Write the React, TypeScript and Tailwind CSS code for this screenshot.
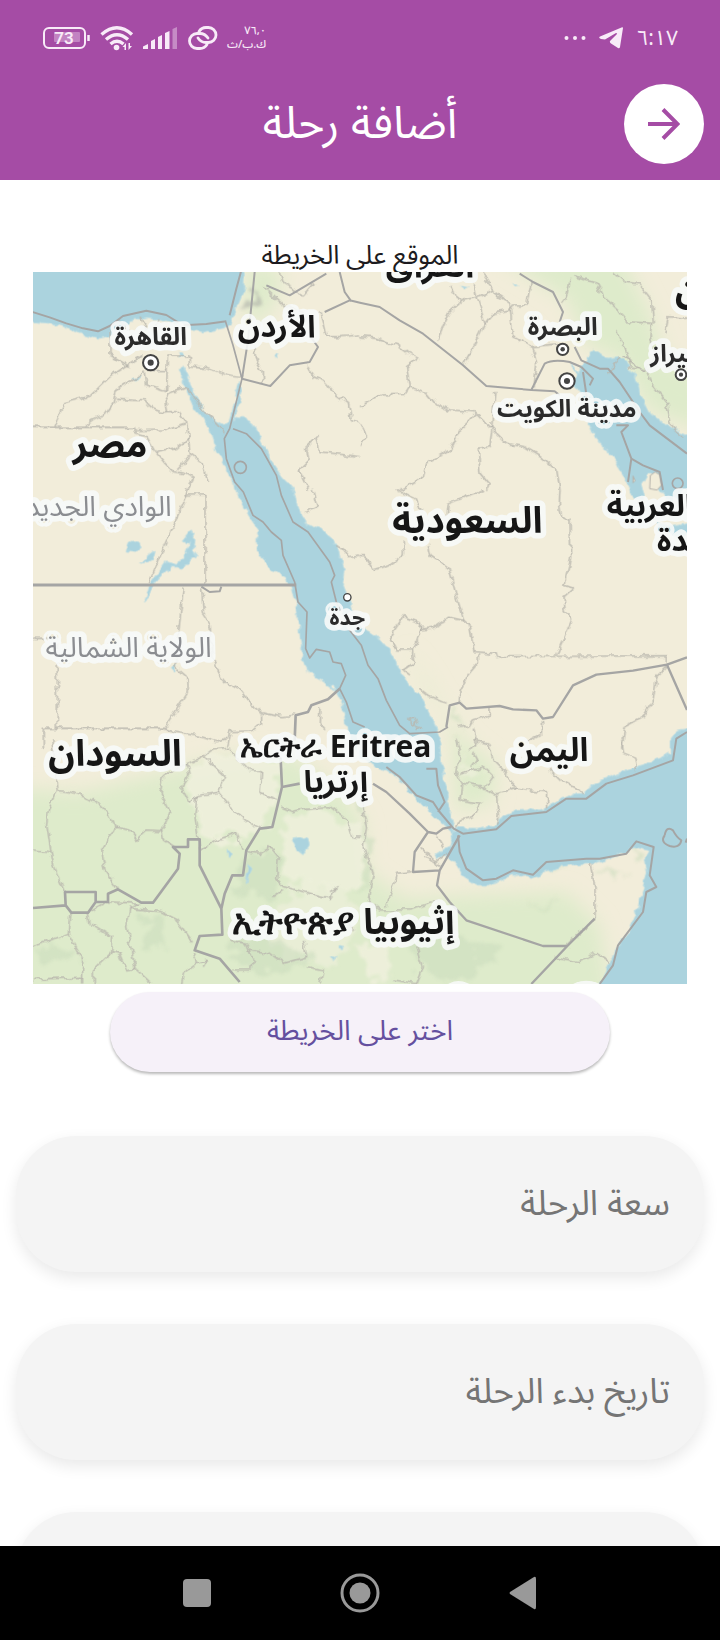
import React from 'react';

const arabic = "font-['Noto_Sans_Arabic','Noto_Kufi_Arabic','DejaVu_Sans',sans-serif]";

type Label = {
  text: string;
  x: number;
  y: number;
  size: number;
  anchor?: 'start' | 'middle' | 'end';
  tone?: 'country' | 'city' | 'region';
  ltr?: boolean;
};

const labels: Label[] = [
  { text: 'العراق', x: 1191, y: 14, size: 100 },
  { text: 'القاهرة', x: 353, y: 219, size: 74, tone: 'city' },
  { text: 'الأردن', x: 731, y: 194, size: 92 },
  { text: 'مصر', x: 231, y: 556, size: 110 },
  { text: 'البصرة', x: 1589, y: 189, size: 74, tone: 'city' },
  { text: 'مدينة الكويت', x: 1601, y: 436, size: 72, tone: 'city' },
  { text: 'شيراز', x: 1852, y: 270, size: 72, anchor: 'end', tone: 'city' },
  { text: 'إيران', x: 1926, y: 90, size: 110, anchor: 'end' },
  { text: 'السعودية', x: 1303, y: 782, size: 110 },
  { text: 'العربية', x: 1721, y: 732, size: 92, anchor: 'end' },
  { text: 'المتحدة', x: 1872, y: 837, size: 92, anchor: 'end' },
  { text: 'الوادي الجديد', x: 416, y: 732, size: 84, anchor: 'start', tone: 'region' },
  { text: 'الولاية الشمالية', x: 536, y: 1154, size: 84, anchor: 'start', tone: 'region' },
  { text: 'جدة', x: 943, y: 1059, size: 64, tone: 'city' },
  { text: 'السودان', x: 246, y: 1482, size: 110 },
  { text: 'ኤርትራ Eritrea', x: 908, y: 1454, size: 90, ltr: true },
  { text: 'إرتريا', x: 908, y: 1561, size: 92 },
  { text: 'اليمن', x: 1548, y: 1467, size: 98 },
  { text: 'إثيوبيا ኢትዮጵያ', x: 931, y: 1985, size: 105 },
];

const labelFill = { country: '#161616', city: '#2b2b2b', region: '#8b8d91' };

function MapLabel({ text, x, y, size, anchor = 'middle', tone = 'country', ltr }: Label) {
  return (
    <text
      x={x}
      y={y}
      fontSize={size}
      textAnchor={anchor}
      direction={ltr ? 'ltr' : 'rtl'}
      fontWeight={tone === 'region' ? 400 : 700}
      fill={labelFill[tone]}
      stroke="#f7faf8"
      strokeOpacity="0.9"
      strokeWidth="34"
      strokeLinejoin="round"
      paintOrder="stroke"
    >
      {text}
    </text>
  );
}

function City({ x, y, r }: { x: number; y: number; r: number }) {
  return (
    <g>
      <circle cx={x} cy={y} r={r} fill="#fff" stroke="#444" strokeWidth="6" />
      <circle cx={x} cy={y} r={r * 0.4} fill="#444" />
    </g>
  );
}

function RegionMap() {
  return (
    <svg viewBox="0 0 1962 2136" role="img" aria-label="الخريطة" className={`block w-full ${arabic}`}>
      <defs>
        <filter id="soft" x="-20%" y="-20%" width="140%" height="140%">
          <feGaussianBlur stdDeviation="28" />
        </filter>
        <filter id="patch" x="-20%" y="-20%" width="140%" height="140%">
          <feTurbulence type="fractalNoise" baseFrequency="0.02" numOctaves="3" seed="4" result="noise" />
          <feDisplacementMap in="SourceGraphic" in2="noise" scale="110" xChannelSelector="R" yChannelSelector="G" />
          <feGaussianBlur stdDeviation="4" />
        </filter>
        <filter id="jagged" filterUnits="userSpaceOnUse" x="-40" y="-40" width="2042" height="2216">
          <feTurbulence type="fractalNoise" baseFrequency="0.04" numOctaves="2" seed="7" result="noise" />
          <feDisplacementMap in="SourceGraphic" in2="noise" scale="22" xChannelSelector="R" yChannelSelector="G" />
        </filter>
      </defs>
      <rect width="1962" height="2136" fill="#f2edda" />

      {/* vegetation */}
      <g fill="#deebcb" filter="url(#soft)">
        <path d="M-60 1550 L150 1560 L400 1500 L560 1460 L760 1440 L930 1560 L990 1650 L1000 1800 L1120 1880 L1300 1870 L1600 1860 L1700 1960 L1740 2200 L-60 2200Z" />
        <path d="M1370 -60 L1760 -60 L1850 120 L1900 260 L2030 330 L2030 480 L1850 420 L1760 260 L1660 220 L1600 80Z" />
        <path d="M640 -20 L740 -20 L740 70 L680 160 L630 120Z" />
        <path d="M1245 1290 L1290 1400 L1390 1480 L1380 1590 L1270 1620 L1260 1440Z" />
        <path d="M1120 1120 L1190 1230 L1240 1320 L1190 1280Z" opacity="0.6" />
      </g>
      <g fill="#f0f0dd" filter="url(#patch)">
        <path d="M460 1490 L560 1440 L740 1470 L740 1570 L690 1660 L520 1720 L480 1580Z" opacity="0.85" />
        <path d="M760 1640 L900 1610 L990 1700 L980 1850 L860 1860 L740 1820Z" opacity="0.75" />
        <path d="M780 1850 L960 1850 L980 1960 L900 2080 L740 2050 L690 1960Z" opacity="0.6" />
        <path d="M970 2020 L1080 2020 L1070 2130 L1000 2120Z" opacity="0.8" />
        <path d="M1290 1450 L1350 1500 L1300 1540Z" opacity="0.7" />
      </g>
      <g fill="#cadcbd" opacity="0.55" filter="url(#patch)">
        <path d="M650 1740 L740 1750 L720 1860 L590 1860Z" />
        <path d="M330 1920 L390 1960 L370 2060 L340 2000Z" />
        <path d="M590 2010 L690 1990 L850 2060 L750 2110 L600 2070Z" />
        <path d="M1100 1950 L1240 1980 L1400 2060 L1270 2130 L1160 2110Z" />
        <path d="M0 2030 L90 2020 L140 2060 L20 2070Z" />
        <path d="M1400 1760 L1600 1780 L1530 1800Z M1660 1800 L1780 1790 L1740 1820Z M1800 1730 L1840 1730 L1820 1760Z" />
        <path d="M1260 1300 L1280 1300 L1270 1380Z M1480 1900 L1580 1890 L1540 1910Z" />
        <path d="M985 1560 L1000 1620 L1020 1800 L990 1860Z" />
        <path d="M640 50 L660 50 L660 120 L630 110Z" fill="#a9aaa5" />
      </g>

      {/* seas and lakes */}
      <g fill="#abd3de" stroke="#b7dae2" strokeWidth="3" strokeLinejoin="round" filter="url(#jagged)">
        <path d="M-25 -25 H634 L632 54 L611 104 L598 140 L590 164 L552 172 L511 180 L471 172 L456 158 L421 154 L391 142 L341 139 L291 149 L256 179 L231 192 L196 199 L151 186 L101 169 L51 154 L-25 146Z" />
        <path d="M451 279 L439 296 L461 354 L481 404 L521 454 L531 484 L551 534 L576 584 L601 634 L611 654 L631 704 L659 749 L681 779 L671 784 L673 834 L691 864 L721 894 L756 914 L776 944 L791 994 L796 1054 L803 1104 L811 1164 L826 1199 L861 1219 L901 1249 L921 1284 L936 1324 L946 1389 L981 1454 L1041 1489 L1091 1514 L1131 1559 L1181 1609 L1221 1649 L1256 1680 L1262 1664 L1246 1604 L1241 1554 L1226 1484 L1219 1404 L1206 1354 L1191 1324 L1161 1274 L1131 1244 L1111 1214 L1091 1174 L1066 1134 L1031 1094 L996 1072 L966 1044 L951 994 L931 944 L936 894 L921 854 L901 804 L861 769 L821 754 L796 714 L781 654 L746 614 L711 564 L691 514 L671 474 L646 444 L611 436 L603 449 L611 419 L621 374 L627 334 L616 329 L606 384 L591 449 L566 459 L536 444 L511 414 L491 374 L461 314Z" />
        <path d="M1256 1674 L1281 1669 L1331 1669 L1381 1662 L1411 1634 L1451 1616 L1521 1614 L1571 1589 L1621 1566 L1651 1564 L1681 1539 L1721 1519 L1781 1494 L1831 1479 L1881 1459 L1912 1440 L1912 1402 L1931 1376 L1990 1366 V2160 H1690 L1721 2094 L1751 2034 L1791 1964 L1816 1904 L1831 1854 L1843 1804 L1836 1754 L1846 1734 L1811 1724 L1781 1739 L1741 1754 L1681 1774 L1631 1779 L1581 1786 L1541 1799 L1496 1816 L1441 1809 L1411 1819 L1371 1839 L1331 1839 L1291 1814 L1271 1774 L1241 1749 L1216 1756 L1206 1749 L1251 1724 L1259 1704Z" />
        <path d="M1616 274 L1636 299 L1661 264 L1671 244 L1681 229 L1701 244 L1721 259 L1761 254 L1781 274 L1806 314 L1821 364 L1851 424 L1891 459 L1931 474 L1990 499 V694 L1900 680 L1880 654 L1873 600 L1845 604 L1825 640 L1835 680 L1800 676 L1776 620 L1761 594 L1741 554 L1711 524 L1681 494 L1666 454 L1671 404 L1641 364 L1621 334 L1631 304Z" />
        <path d="M1868 750 L1910 762 L1990 748 V790 L1880 785Z" />
        <path d="M779 1702 L800 1694 L826 1700 L828 1720 L810 1748 L785 1728Z M585 1732 L598 1744 L590 1760Z M645 1780 L660 1790 L640 1835Z" />
        <path d="M475 774 L486 800 L483 840 L495 855 L470 862 L450 885 L410 885 L380 915 L335 990 L350 940 L400 870 L430 878 L460 845 L470 815 L448 808Z M285 815 L300 804 L325 826 L310 838 L280 834Z M345 850 L366 835 L360 862 L320 875Z" />
        <path d="M300 320 L322 314 L305 328Z M440 240 L455 250 L445 256Z M415 1190 L430 1178 L425 1200Z M1285 40 L1305 44 L1290 52Z M1440 36 L1460 42 L1445 44Z M725 250 L738 247 L730 256Z M920 2020 L930 2022 L918 2036Z M892 2060 L912 2054 L900 2066Z" />
      </g>
      <path d="M1852 610 L1866 600 L1880 608 L1885 640 L1872 654 L1850 650Z M1800 612 L1806 626 L1800 632Z" fill="#f2edda" stroke="#b3b0aa" strokeWidth="3" />

      {/* province lines */}
      <g fill="none" stroke="#b9b7ae" strokeWidth="4" strokeLinejoin="round" filter="url(#jagged)">
        <g transform="translate(-9 -126)">
          <path d="M9 592 H310 L318 612 L350 620 L372 660 L405 700 L430 725 L465 730 L490 745 L470 780 M72 590 L103 518 L180 498 L240 440 L340 375 M165 590 Q190 560 225 555 L250 520 L258 480 L310 450 L345 425 L350 465 L410 485 L412 380 M240 300 V375 L300 410 M258 505 L345 510 Q370 550 410 545 L445 545 L470 580 L475 630 L480 670 L520 700 L535 760 M410 545 L405 515 L420 488 L465 475 M355 422 H410 M412 378 H478 V410 M478 408 L530 412 Q590 438 640 440 M318 602 L400 600 L465 580 M380 668 L440 655 L475 625 M440 722 L480 675 M465 470 L490 495 L520 540 L585 610 M670 345 L680 395 L697 425 L698 460 M700 170 L760 225 L830 250 M750 126 L760 160 L820 195 L850 160 M870 250 L890 320 L930 320 L990 315 M830 405 L850 440 L885 455 L920 495 L955 520 L965 570 L990 575 M990 680 L870 665 L860 620 L830 650 L835 690 L805 720 L835 780 M270 265 L300 310 M330 260 L350 300 M390 265 L370 300" />
        </g>
        <g transform="translate(981 -126)">
          <path d="M0 320 L50 325 L110 345 L145 370 L175 385 L140 410 L148 470 L135 490 L65 492 L0 530 M148 470 L200 490 L225 520 L270 540 L345 545 L400 600 L440 640 L490 650 L540 680 L590 720 L600 780 M350 550 L300 600 L270 660 L200 700 L190 740 L120 780 M395 600 L390 650 L355 655 L360 730 L385 760 L380 780 M0 580 L20 620 L0 645 M395 595 L405 480 M230 335 L265 250 L310 210 L360 200 L400 180 L375 150 M375 280 L340 350 L310 405 M270 165 L300 215 M340 160 L350 200 L375 280 L400 250 L450 240 L460 225 L500 225 L515 150 M400 185 L450 220 L458 320 L515 350 L610 340 M515 350 L530 400 L522 470 M370 130 L390 160 M630 150 L620 200 L605 220 M640 140 L710 160 L730 200 L775 240 L800 275 L875 280 L870 320 L890 380 L850 420 L790 380 M770 300 L795 360 L810 410 L860 420 L880 470 L920 520 L935 590 L970 620 M760 126 L800 160 L840 165 L875 210 L880 280 M915 310 L925 260 L980 265 M780 380 L745 430" />
        </g>
        <g transform="translate(-9 654)">
          <path d="M470 0 L465 15 H525 V285 M470 15 L355 280 M460 290 L435 530 L470 560 L472 610 L405 712 M9 445 H82 V715 M40 775 V715 L400 715 L430 725 L510 740 L560 755 L590 745 M515 295 L520 370 L540 400 L545 480 Q560 550 585 575 L630 600 L660 640 L700 670 L760 680 L795 675 M695 672 V700 L670 722 L600 725 L590 770 M870 650 L868 700 L885 720 M850 0 L865 50 L825 70 M915 170 L940 180 L955 200 L990 195" />
        </g>
        <g transform="translate(981 654)">
          <path d="M110 0 L165 25 L185 60 M370 0 L300 25 L265 40 L262 75 M600 0 L598 40 L605 80 L630 90 L632 200 L612 285 L640 295 L612 320 L615 360 L635 390 L590 495 M130 155 L130 195 L90 225 L40 240 L15 200 L0 200 M205 165 L212 195 L265 230 L290 320 L312 392 L265 382 L220 415 L185 420 L185 400 L130 380 L90 440 L110 480 L160 480 L185 410 M312 392 L328 405 L342 485 L405 490 L410 505 L430 500 L922 497 V525 M355 490 L355 515 L325 550 L300 600 L298 640 M160 480 L165 515 L130 540 L150 555 M922 527 L890 560 L880 630 L850 680 L795 710 L785 780 M390 650 V675 L340 690 L330 705 L290 710 M340 710 L350 760 L330 780 M548 690 L548 730 L500 755 M180 600 L200 615 L260 640" />
        </g>
        <g transform="translate(-9 1404)">
          <path d="M65 0 L82 155 L55 210 L50 250 L62 330 L72 380 L105 460 M82 155 Q150 155 210 195 Q240 220 255 262 L215 330 L225 390 L265 448 M255 262 L300 270 L320 298 L350 270 L395 272 L420 220 L390 160 L400 110 L450 80 L520 50 L545 30 L600 25 M395 272 L400 300 L430 320 M520 50 L585 110 L565 160 L500 170 L480 190 L455 140 L480 100 L470 70 M500 170 L495 230 L510 330 L560 300 L620 280 L640 330 M565 160 L600 200 L655 245 L690 262 M600 30 L655 90 L695 95 L690 160 L745 180 M9 330 L60 335 M755 200 L790 215 L830 205 L900 200 L950 240 L965 290 L990 292 M650 335 L690 340 L720 320 L745 350 L740 420 L760 440 L900 475 L925 440 L900 455 M730 470 L760 450 M120 520 L115 580 L65 600 L9 620 M115 580 L158 660 V731 M175 520 L180 550 L245 590 L242 640 L190 690 V731 M242 635 L270 640 L290 690 L315 685 L290 560 L300 505 L330 490 L230 485 L175 515 M300 505 L390 515 L440 540 L490 610 M315 685 L365 731 M490 635 L500 670 L530 660 L520 680 M500 668 L460 700 L455 731 M9 718 L158 712 M600 600 L650 610 L670 660 L665 690 L610 690 M655 630 L720 640 L760 670 L830 650 L820 600 M830 680 L880 690 L870 731 M935 520 L960 540 L970 570" />
        </g>
        <g transform="translate(981 1404)">
          <path d="M5 190 L20 260 L10 320 L40 400 L25 480 L60 510 L150 510 L240 480 M155 395 L110 400 L80 500 M170 620 L190 680 L170 731 L100 720 M570 90 L600 120 L660 150 L668 162 M785 0 L790 40 L825 55 L830 90 M690 370 L705 440 V535 L620 618 M590 652 L655 665 L710 640 L750 668 M290 0 L300 40 L290 100 L305 130 L360 140 L410 165 L470 145 L495 150 L560 155 V205 M410 165 L415 230 L410 255 M340 0 L385 10 L400 60 L440 100 L470 150 M305 130 L300 180 L360 190 L340 230 L300 240 L290 265 M340 40 L350 60 L335 80 M300 100 L370 80 L400 110 L370 150 M185 325 L210 350 L245 380 M230 290 L250 325 M195 350 L225 370 L260 340" />
        </g>
        <path d="M1130 1340 L1140 1335 L1150 1350 L1138 1358Z M1145 1360 L1160 1365 L1150 1372Z" />
      </g>

      {/* national and maritime boundaries */}
      <g fill="none" stroke="#a5a5a4" strokeWidth="6" strokeLinejoin="round">
        <path d="M-5 119 L50 136 L100 154 L150 169 L195 178 L230 162 L270 132 L340 116 L400 129 L450 160 L520 156 L580 148 M590 130 L610 50 L625 -5" />
        <path d="M578 150 L600 220 L627 320 L590 470 L574 500 L580 560 L605 630 L631 660 L660 730 L690 750 L715 780 L745 805 L750 850 L785 930 L795 990 L822 1020 L818 1130 L830 1158 L850 1132 L890 1140 L900 1170 L925 1175 L938 1210 L920 1250 L940 1290 L960 1350 L995 1365" strokeWidth="5" />
        <path d="M600 470 L640 485 L685 530 L730 610 L745 670 L780 750 L825 780 L890 870 L905 910 L895 930 L910 990 L950 1075 L985 1120 L1005 1180 L1035 1220 L1060 1285 L1100 1360 L1130 1385 L1220 1380 L1245 1365" strokeWidth="5" />
        <path d="M645 205 L665 0 M645 205 L627 320 L712 342 L770 280 L830 270 L855 225 L815 170 M875 120 L950 85 L981 92 L1040 105 L1100 145 L1170 185 L1290 280 L1360 342 L1495 354 L1535 275 Q1560 260 1610 270 L1645 285 M1495 354 L1565 358 L1580 370 M920 0 L935 60 L955 88 M700 40 L770 70 L880 5 M1460 5 L1500 30 L1560 60 L1590 120 L1580 150 M1625 225 L1645 265 L1700 290 L1725 290 L1760 330 L1820 420 L1850 460 L1962 545 M1645 285 L1680 320 L1670 340 M1650 300 L1665 400 M1750 460 L1785 460 L1765 480 L1795 560 L1785 630 M1795 560 L1830 580 L1880 600 L1890 654" />
        <path d="M0 939 H790" strokeWidth="9" />
        <path d="M505 944 L530 960 L560 958 L565 944" />
        <path d="M785 1405 L788 1330 L825 1320 L835 1300 L885 1282 L920 1250 M740 1400 L747 1545 L718 1665 L680 1670 L640 1735 L630 1810 L598 1810 L575 1865 L565 1910 L500 1780 L500 1702 H465 V1725 H420 L440 1745 L435 1790 L360 1892 H325 L255 1852 L225 1865 V1890 H188 V1860 H96 L98 1900 L0 1908 M98 1900 L115 1922 H165 L188 1890 M565 1910 L568 1988 L500 1992 L485 2035 L560 2060 L620 2130 M747 1545 L800 1535" strokeWidth="8" />
        <path d="M1020 1535 L1060 1560 L1130 1625 L1185 1680 L1145 1740 L1140 1800 L1220 1795 L1280 1690 M1185 1680 L1210 1685 L1230 1670 L1255 1665 M1220 1795 L1212 1840 L1250 1890 L1300 1945 L1530 2022 H1603 L1495 2136 M1603 2022 L1685 1940" strokeWidth="7" />
        <path d="M1240 1365 L1250 1300 L1280 1292 L1300 1310 L1400 1302 L1440 1312 L1510 1315 L1530 1340 L1560 1335 L1620 1240 L1690 1208 L1800 1196 L1902 1178 L1962 1156 M1902 1178 L1962 1314" strokeWidth="7" />
        <path d="M1060 1485 L1100 1515 L1150 1570 L1200 1590 L1220 1620 L1262 1670 L1290 1685 L1390 1672 L1435 1632 L1540 1620 L1600 1580 L1660 1580 L1720 1535 L1800 1510 L1920 1465 L1930 1400 L1962 1380 M1275 1690 L1280 1740 L1300 1790 L1350 1825 L1390 1820 L1440 1795 L1500 1808 L1540 1770 L1660 1760 L1700 1760 L1780 1745 L1810 1708 L1862 1725 L1850 1810 L1870 1845 L1840 1860 L1830 1920 L1755 2020 L1740 2080 L1700 2136 M1180 1490 L1210 1490 L1215 1540 L1235 1590 L1215 1620" />
        <circle cx="622" cy="586" r="18" strokeWidth="5" />
        <path d="M1895 1690 Q1900 1660 1920 1675 Q1930 1695 1945 1705 Q1940 1730 1910 1722 Q1880 1710 1895 1690 M1962 1700 L1958 1712" />
        <circle cx="1934" cy="634" r="16" strokeWidth="5" />
      </g>

      <g>
        {labels.map((label) => (
          <MapLabel key={label.text} {...label} />
        ))}
      </g>
      <City x={353} y={272} r={23} />
      <City x={1589} y={232} r={17} />
      <City x={1602} y={327} r={23} />
      <City x={1944} y={308} r={16} />
      <circle cx="943" cy="976" r="11" fill="#fff" stroke="#444" strokeWidth="4" />
      <g fill="#f7faf8" opacity="0.9">
        <path d="M1245 2136 Q1275 2118 1310 2136Z M1620 2136 Q1660 2116 1700 2136Z" />
      </g>
    </svg>
  );
}

function StatusBar() {
  return (
    <div dir="ltr" className="flex h-[76px] items-center justify-between pr-[42px] pl-[43px] text-[#f8ebf8]">
      <div className="flex items-center">
        <svg viewBox="0 0 47 22" className="mr-[10px] h-[22px] w-[47px]" role="img" aria-label="73%">
          <rect x="1" y="1" width="41" height="20" rx="5" fill="none" stroke="currentColor" strokeWidth="2" />
          <rect x="11" y="5" width="26" height="10" rx="1" fill="currentColor" opacity="0.35" />
          <text x="21" y="17" textAnchor="middle" fontSize="17" fontWeight="600" fill="currentColor" className="font-[Roboto,sans-serif]">73</text>
          <path d="M45.500 8v6" stroke="currentColor" strokeWidth="2.500" />
        </svg>
        <svg viewBox="0 0 34 26" className="mr-[9px] h-[26px] w-[34px]" aria-hidden="true">
          <g fill="none" stroke="currentColor" strokeWidth="3.4">
            <path d="M1.500 9.500Q17 -4 32 9.500" />
            <path d="M6 14.500Q17 5 28 14.500" />
            <path d="M10.500 19Q17 13.500 23.500 19" />
          </g>
          <circle cx="16.500" cy="22.500" r="2.800" fill="currentColor" />
          <path d="M26 18l-3.500 4h2v3h1.500zM28.500 18v7l3.500-4h-2v-3z" fill="currentColor" />
        </svg>
        <svg viewBox="0 0 35 24" className="mr-[9px] h-6 w-[35px]" aria-hidden="true">
          <g fill="currentColor">
            <path d="M0 23V20.500L5 18V23Z" />
            <path d="M8 23V15L12 13V23Z" />
            <path d="M15 23V11L19 9V23Z" />
            <path d="M22 23V7L26.500 5V23Z" />
            <path d="M29.500 23V3L34 1V23Z" opacity="0.4" />
          </g>
        </svg>
        <svg viewBox="0 0 32 26" className="mr-2 h-[26px] w-8" fill="none" stroke="currentColor" strokeWidth="2.800" strokeLinecap="round" aria-hidden="true">
          <path d="M12 6.500Q14.500 2.500 19 2.500H21.500A7.500 7.500 0 0 1 21.500 17.500H19Q14 17.500 11 13" />
          <path d="M20 19.500Q17.500 23.500 13 23.500H10A7.500 7.500 0 0 1 10 8.500H13Q18 8.500 21 13" />
        </svg>
        <div dir="rtl" className={`flex flex-col text-[11px] leading-[14px] font-medium ${arabic}`}>
          <span>٧٦,٠</span>
          <span>ك.ب/ث</span>
        </div>
      </div>
      <div className="flex items-center gap-[13px]">
        <svg viewBox="0 0 22 6" className="h-[6px] w-[22px]" fill="currentColor" aria-hidden="true">
          <circle cx="2.500" cy="3" r="2" /><circle cx="11" cy="3" r="2" /><circle cx="19.500" cy="3" r="2" />
        </svg>
        <svg viewBox="0 0 24 22" className="h-[22px] w-6" fill="currentColor" aria-hidden="true">
          <path d="M24 1Q24 0 22.500 0.500L1 9.500Q-1 11 2 12L6 12.500L17 6Q19 6 17.500 7.500L11 14Q10.500 15.500 12 16.500L19 21Q20.500 22 21 20Z" />
        </svg>
        <span className={`text-[21px] leading-6 ${arabic}`}>٦:١٧</span>
      </div>
    </div>
  );
}

function Field({ label, placeholder }: { label: string; placeholder?: string }) {
  return (
    <input
      type="text"
      aria-label={label}
      placeholder={placeholder}
      className="h-[136px] w-full shrink-0 rounded-[60px] bg-[#f4f4f4] px-[34px] text-[35px] text-gray-800 shadow-[0_6px_16px_rgba(0,0,0,0.09)] outline-none placeholder:text-[#757575] placeholder:opacity-100"
    />
  );
}

export default function App() {
  return (
    <div dir="rtl" className={`flex h-dvh flex-col bg-white ${arabic}`}>
      <header className="h-[180px] shrink-0 bg-[#a54ca5]">
        <StatusBar />
        <div className="grid grid-cols-[80px_1fr_80px] items-center px-4 pt-2">
          <button type="button" aria-label="رجوع" className="flex size-20 items-center justify-center rounded-full bg-white text-[#a54ca5]">
            <svg viewBox="0 0 32 32" className="size-8" fill="none" stroke="currentColor" strokeWidth="4" aria-hidden="true">
              <path d="M0 16H29M15 1.500L29.500 16L15 30.500" />
            </svg>
          </button>
          <h1 className="text-center text-[45px] leading-[60px] text-white">أضافة رحلة</h1>
        </div>
      </header>

      <main className="min-h-0 flex-1 overflow-hidden">
        <section className="flex flex-col items-center px-[33px] pt-[60px]">
          <h2 className="text-[26px] leading-8 text-[#1d1b20]">الموقع على الخريطة</h2>
          <RegionMap />
          <button type="button" className="mt-2 h-20 w-[500px] max-w-full rounded-full bg-[#f6f1f9] text-[28px] text-[#65509f] shadow-[0_2px_3px_rgba(0,0,0,0.28)]">
            اختر على الخريطة
          </button>
        </section>
        <form className="flex flex-col gap-[52px] px-4 pt-16">
          <Field label="سعة الرحلة" placeholder="سعة الرحلة" />
          <Field label="تاريخ بدء الرحلة" placeholder="تاريخ بدء الرحلة" />
          <Field label="تاريخ انتهاء الرحلة" />
        </form>
      </main>

      <nav dir="ltr" className="flex h-[94px] shrink-0 items-center justify-center gap-[123px] bg-black text-[#999]">
        <button type="button" aria-label="التطبيقات الأخيرة" className="flex size-10 items-center justify-center">
          <span className="size-7 rounded-[4px] bg-[#999]" />
        </button>
        <button type="button" aria-label="الرئيسية" className="flex size-10 items-center justify-center">
          <svg viewBox="0 0 40 40" className="size-10" aria-hidden="true">
            <circle cx="20" cy="20" r="18" fill="none" stroke="currentColor" strokeWidth="3" />
            <circle cx="20" cy="20" r="10.500" fill="currentColor" />
          </svg>
        </button>
        <button type="button" aria-label="السابق" className="flex size-10 items-center justify-center">
          <svg viewBox="0 0 28 34" className="h-[34px] w-7" fill="currentColor" aria-hidden="true">
            <path d="M1 16L25 1Q27 0 27 3V31Q27 34 25 33L1 18Q0 17 1 16Z" />
          </svg>
        </button>
      </nav>
    </div>
  );
}
